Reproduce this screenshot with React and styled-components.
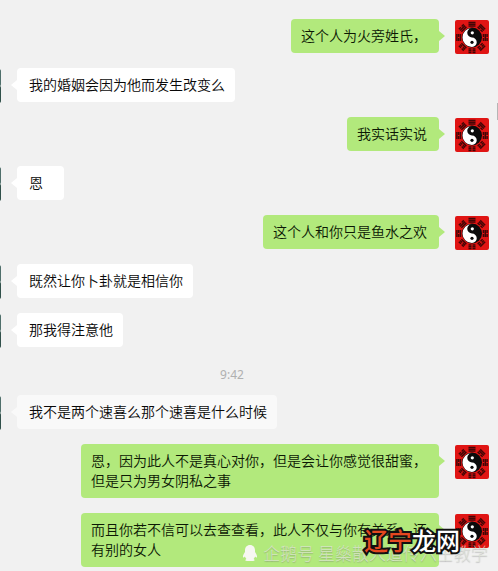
import React from "react";
import styled, { createGlobalStyle } from "styled-components";

const GlobalStyle = createGlobalStyle`
    body {
        margin: 0;
        background: #f1f1f1;
        font-family: "Noto Sans CJK SC", "Noto Sans", sans-serif;
    }
`

const Chat = styled.main`
    position: relative;
    overflow: hidden;
    padding: 19px 9px 4px 0;
`

const Messages = styled.div`
    display: flex;
    flex-direction: column;
    gap: 15px;
`

const Row = styled.div`
    display: flex;
    flex-direction: ${props => (props.$mine ? 'row-reverse' : 'row')};
    align-items: flex-start;
    gap: 16px;
    margin-left: ${props => (props.$mine ? '0' : '-33px')};
`

const AvatarBox = styled.div`
    flex: none;
    width: 34px;
    height: 34px;
    margin: 1px 0 -1px;
    border-radius: 2px;
    overflow: hidden;
    background: ${props => (props.$mine ? '#e01514' : 'linear-gradient(#4f6f6b 45%, #a9b8b4 50%, #30504a 55%)')};

    svg {
        display: block;
    }
`

const Bubble = styled.p`
    position: relative;
    box-sizing: border-box;
    min-width: 47px;
    max-width: 358px;
    margin: 0;
    padding: ${props => (props.$mine ? '6px 12px 8px 10px' : '6px 10px 8px 12px')};
    border-radius: 4px;
    background: ${props => (props.$mine ? '#b2e97c' : props.$faded ? '#f9f9f9' : '#ffffff')};
    color: ${props => (props.$mine ? '#0c1804' : '#080808')};
    font-size: 14px;
    font-weight: 350;
    line-height: 20px;

    &::after {
        content: "";
        position: absolute;
        top: 12px;
        ${props => (props.$mine ? 'left: 100%' : 'right: 100%')};
        border: 5px solid transparent;
        ${props => (props.$mine ? 'border-left: 6px solid #b2e97c; border-right-width: 0' : `border-right: 6px solid ${props.$faded ? '#f9f9f9' : '#ffffff'}; border-left-width: 0`)};
    }
`

const Time = styled.time`
    align-self: center;
    padding: 4px 25px 0 0;
    margin-bottom: -4px;
    color: #b0b0b0;
    font-family: "Noto Sans", sans-serif;
    font-size: 12px;
    line-height: 18px;
`

const ScrollThumb = styled.div`
    position: absolute;
    top: 103px;
    right: 0;
    width: 1px;
    height: 17px;
    background: #b5b5b5;
`

const Credit = styled.div`
    position: absolute;
    right: 10px;
    bottom: 6px;
    display: flex;
    align-items: center;
    gap: 5px;
    color: rgba(226, 230, 220, 0.75);
    font-size: 17px;
    font-weight: 300;
    line-height: 24px;
    white-space: nowrap;
    text-shadow: 0 1px 1px rgba(110, 110, 110, 0.4);
`

const SiteName = styled.div`
    position: absolute;
    right: 38px;
    bottom: 13px;
    color: #ffffff;
    font-size: 24px;
    font-weight: 500;
    line-height: 36px;
    -webkit-text-stroke: 4px #111111;
    paint-order: stroke fill;
`

const Accent = styled.span`
    color: #e5481f;
`

const messages = [
    { mine: true, text: '这个人为火旁姓氏，' },
    { text: '我的婚姻会因为他而发生改变么' },
    { mine: true, text: '我实话实说' },
    { text: '恩' },
    { mine: true, text: '这个人和你只是鱼水之欢' },
    { text: '既然让你卜卦就是相信你' },
    { text: '那我得注意他' },
    { time: '9:42' },
    { faded: true, text: '我不是两个速喜么那个速喜是什么时候' },
    { mine: true, text: '恩，因为此人不是真心对你，但是会让你感觉很甜蜜，但是只为男女阴私之事' },
    { mine: true, text: '而且你若不信可以去查查看，此人不仅与你有关系，还有别的女人' },
]

// broken / solid lines of the eight trigrams, 1 = solid
const trigrams = [[1, 1, 1], [1, 1, 0], [0, 1, 0], [1, 0, 0], [0, 0, 0], [0, 0, 1], [1, 0, 1], [0, 1, 1]]

function Bagua() {
    return (
        <svg width="34" height="34" viewBox="0 0 34 34" aria-hidden="true">
            <g stroke="#420606" strokeWidth="1.5">
                {trigrams.map((lines, i) => (
                    <g key={i} transform={`rotate(${i * 45} 17 17.500)`}>
                        {lines.map((solid, j) => (
                            <path key={j} d={solid ? `M13.5 ${2.4 + j * 1.8}h7` : `M13.5 ${2.4 + j * 1.8}h3m1 0h3`} />
                        ))}
                    </g>
                ))}
            </g>
            <circle cx="17" cy="17.5" r="10" fill="#0b0b0b" />
            <path d="M17 8a9.500 9.500 0 0 0 0 19a4.750 4.750 0 0 0 0-9.500a4.750 4.750 0 0 1 0-9.500z" fill="#fff" />
            <circle cx="17.3" cy="12.8" r="1.600" fill="#fff" />
            <circle cx="17" cy="22.3" r="1.600" fill="#0b0b0b" />
        </svg>
    )
}

function Penguin() {
    return (
        <svg width="16" height="18" viewBox="0 0 16 18" fill="#f7f7f2" aria-hidden="true">
            <path d="M8 1C4.800 1 3 3.300 3 6.200V8C1.700 9.800.8 11.600 1 13c.2 1 1.200.4 1.900-.5.3 1 .8 1.700 1.500 2.400-1.300.5-1.400 2.100.3 2.100h6.600c1.700 0 1.600-1.600.3-2.100.7-.7 1.200-1.400 1.500-2.400.7.900 1.700 1.500 1.900.5.2-1.400-.7-3.200-2-5V6.200C13 3.300 11.200 1 8 1z" />
        </svg>
    )
}

function Message(props) {
    const { mine, faded, text } = props
    return (
        <Row $mine={mine}>
            <AvatarBox $mine={mine}>{mine && <Bagua />}</AvatarBox>
            <Bubble $mine={mine} $faded={faded}>{text}</Bubble>
        </Row>
    )
}

function App() {
    return (
        <>
            <GlobalStyle />
            <Chat>
                <Messages>
                    {messages.map((message, i) => (
                        message.time
                            ? <Time key={i}>{message.time}</Time>
                            : <Message key={i} {...message} />
                    ))}
                </Messages>
                <ScrollThumb />
                <Credit>
                    <Penguin />
                    <span>企鹅号 星燊散人道传六壬教学</span>
                </Credit>
                <SiteName><Accent>辽宁</Accent>龙网</SiteName>
            </Chat>
        </>
    )
}

export default App
